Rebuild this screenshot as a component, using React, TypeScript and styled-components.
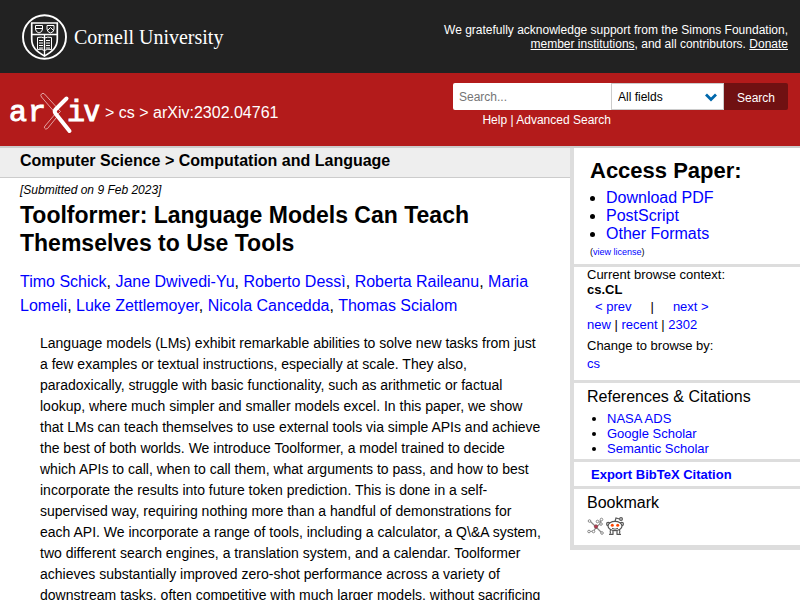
import React from "react";
import styled, { createGlobalStyle } from "styled-components";

const GlobalStyle = createGlobalStyle`
  * { box-sizing: border-box; }
  body {
    margin: 0;
    background: #fff;
    color: #000;
    font-family: "Liberation Sans", Arial, Helvetica, sans-serif;
    font-size: 16px;
  }
`;

const Link = styled.a`
  color: #00f;
  text-decoration: none;
`;

const TopBar = styled.div`
  display: flex;
  align-items: center;
  justify-content: space-between;
  background: #222;
  color: #fff;
  min-height: 73px;
  padding: 0 12px 0 22px;
`;

const Brand = styled.a`
  display: flex;
  align-items: center;
  gap: 7px;
  color: #fff;
  text-decoration: none;
  font-family: "Liberation Serif", "Times New Roman", serif;
  font-size: 20px;
  line-height: 24px;
`;

const Support = styled.p`
  margin: 0;
  font-size: 12px;
  line-height: 14px;
  text-align: right;
  a { color: #fff; text-decoration: underline; }
`;

const Header = styled.header`
  display: flex;
  justify-content: space-between;
  align-items: flex-start;
  background: #b31b1b;
  min-height: 75px;
  border-bottom: 2px solid #ccc;
  padding: 10px 12px 0 8px;
`;

const Crumbs = styled.nav`
  display: flex;
  align-items: center;
  gap: 4px;
  min-height: 60px;
  color: #fff;
  line-height: 18px;
  a { color: #fff; text-decoration: none; }
  svg { display: block; }
`;

const SearchForm = styled.form`
  width: 335px;
  color: #fff;
  font-size: 12px;
`;

const SearchRow = styled.div`
  display: flex;
  height: 27px;
`;

const SearchInput = styled.input`
  flex: 1;
  min-width: 0;
  border: 0;
  border-radius: 2px 0 0 2px;
  padding: 0 6px;
  font: inherit;
  &::placeholder { color: #757575; }
`;

const SelectBox = styled.div`
  position: relative;
  width: 113px;
  svg { position: absolute; right: 7px; top: 10px; pointer-events: none; }
`;

const Select = styled.select`
  appearance: none;
  width: 100%;
  height: 100%;
  border: 1px solid #ccc;
  border-radius: 0;
  background: #fff;
  color: #000;
  padding: 0 6px;
  font: inherit;
`;

const SearchButton = styled.button`
  width: 64px;
  border: 0;
  border-radius: 0 2px 2px 0;
  background: #701112;
  color: #fff;
  font: inherit;
  padding: 2px 0 0;
`;

const Help = styled.div`
  width: 158px;
  white-space: nowrap;
  text-align: right;
  line-height: 14px;
  margin-top: 3px;
  a { color: #fff; text-decoration: none; }
`;

const Columns = styled.div`
  display: grid;
  grid-template-columns: minmax(0, 1fr) 230px;
  align-items: start;
`;

const Subject = styled.div`
  background: #eee;
  border-bottom: 1px solid #ccc;
  padding: 3px 20px 7px;
  font-weight: bold;
  line-height: 19px;
`;

const Article = styled.article`
  padding: 5px 20px 0;
`;

const Dateline = styled.div`
  font-size: 12px;
  font-style: italic;
  line-height: 14px;
`;

const Title = styled.h1`
  margin: 4px 40px 13px 0;
  font-size: 23px;
  line-height: 28px;
`;

const Authors = styled.div`
  margin-right: 20px;
  line-height: 24px;
`;

const Abstract = styled.blockquote`
  margin: 15px 0 20px 20px;
  font-size: 14px;
  line-height: 21px;
`;

const Side = styled.aside`
  border-left: 4px solid #ddd;
  border-bottom: 5px solid #ddd;
`;

const Panel = styled.section<{ $pad: string }>`
  padding: ${(p) => p.$pad};
  font-size: 13px;
  line-height: 15px;
  & + & { border-top: 3px solid #ddd; }
`;

const PanelTitle = styled.h2`
  margin: 0;
  font-size: 22px;
  line-height: 26px;
`;

const SmallTitle = styled.h3`
  margin: 0;
  font-size: 16px;
  font-weight: normal;
  line-height: 19px;
`;

const LinkList = styled.ul<{ $size: number; $line: number }>`
  margin: 5px 0 3px;
  padding-left: ${(p) => (p.$size > 14 ? 16 : 20)}px;
  font-size: ${(p) => p.$size}px;
  line-height: ${(p) => p.$line}px;
`;

const License = styled.div`
  font-size: 9px;
  line-height: 12px;
`;

const PrevNext = styled.div`
  display: flex;
  gap: 19px;
  padding: 2px 8px 3px;
`;

const Line = styled.div<{ $top?: number }>`
  margin-top: ${(p) => p.$top ?? 0}px;
`;

const Icons = styled.div`
  display: flex;
  gap: 2px;
  margin-top: 5px;
  a { display: block; height: 18px; }
`;

const Seal = () => (
  <svg width="45" height="46" viewBox="0 0 45 46" fill="none" stroke="#fff">
    <ellipse cx="22.5" cy="23" rx="21.5" ry="21.8" strokeWidth="1.9" />
    <path d="M9.700 9h25.600v16c0 8.500-5 12.500-12.800 17C14.700 37.500 9.700 33.500 9.700 25z" strokeWidth="1.700" />
    <path d="M10 20.500h25M22.500 20.500V42" strokeWidth="1.300" />
    <path d="M13.500 11.500h7v3.500q0 3-3.500 4-3.500-1-3.500-4zM25 11.500h7v3.500q0 3-3.500 4-3.500-1-3.500-4zM14 14.500h6M26 16l2.500-2.500L31 16" />
    <path d="M15.500 23.500q4-1 7 .5 3-1.500 7-.5v12q-4-1-7 1-3-2-7-1zM17 26.500h4M17 29h4M17 31.500h4M17 34h4M24 26.500h4M24 29h4M24 31.500h4M24 34h4" />
  </svg>
);

const ArxivLogo = () => (
  <svg width="93" height="48" viewBox="0 0 93 48" role="img" aria-label="arXiv">
    <g fill="#fff" stroke="#fff" strokeWidth="1" fontFamily="Liberation Mono, monospace" fontSize="30">
      <text x="1" y="32">a</text>
      <text x="20" y="32">r</text>
      <text x="59" y="32">i</text>
      <text x="75" y="32" fontFamily="DejaVu Sans Mono, monospace" fontSize="29">v</text>
    </g>
    <path d="M33.500 5q-1.500 1 0 3L49 26l3.500-3.500L36.500 5q-1.500-1.500-3 0zM50.500 26L39.500 39.500q-2 1.500-3-.5-.5-1 .5-2l11-13" fill="none" stroke="#e3a3a3" />
    <path d="M58.500 9.500L47.500 20.500q-1.500 2 0 4L61.500 42" fill="none" stroke="#fff" strokeWidth="4" strokeLinecap="round" strokeLinejoin="round" />
  </svg>
);

const Chevron = () => (
  <svg width="12" height="9" viewBox="0 0 12 9" fill="none" stroke="#0068ac" strokeWidth="2.800">
    <path d="M1 1.500l5 5 5-5" />
  </svg>
);

const BibSonomy = () => (
  <svg width="17" height="18" viewBox="0 0 17 18" fill="none" stroke="#888">
    <path d="M3.500 4.500L9 10l4-3V3.500M13 7l1-3.500M9 10l5.500 5.500M9 10l-2 4-4 .5" strokeWidth="1.200" />
    <g fill="#fff">
      <circle cx="2.500" cy="4" r="1.300" />
      <circle cx="14.500" cy="2.500" r="1.300" />
      <circle cx="10.500" cy="4.500" r="1.300" />
      <circle cx="14" cy="7" r="1.300" />
      <circle cx="2" cy="14.500" r="1.300" />
      <circle cx="6.500" cy="14.500" r="1.300" />
      <circle cx="15" cy="16" r="1.300" />
    </g>
    <circle cx="9" cy="9.500" r="1.600" fill="#c03058" stroke="#844" />
  </svg>
);

const Reddit = () => (
  <svg width="18" height="18" viewBox="0 0 18 18" fill="#fff" stroke="#555" strokeWidth="1.200">
    <path d="M5 12q-1.500 2-.5 4.500M13 12q1.500 2 .5 4.500M3 17.300h4.500M10.500 17.300H15M7 13v4M11 13v4" />
    <circle cx="2.200" cy="7" r="1.600" />
    <circle cx="15.800" cy="7" r="1.600" />
    <ellipse cx="9" cy="9" rx="7" ry="4.700" />
    <path d="M9 4.300l1-3.300 3.500 1" fill="none" />
    <circle cx="15" cy="2" r="1.400" />
    <path d="M6 11.300q3 1.800 6 0" fill="none" strokeWidth="1" />
    <circle cx="6.300" cy="8.300" r="1.500" fill="#ff4500" stroke="none" />
    <circle cx="11.700" cy="8.300" r="1.500" fill="#ff4500" stroke="none" />
  </svg>
);

const authors = [
  "Timo Schick", "Jane Dwivedi-Yu", "Roberto Dessì", "Roberta Raileanu",
  "Maria Lomeli", "Luke Zettlemoyer", "Nicola Cancedda", "Thomas Scialom",
];

const abstractLines = [
  "Language models (LMs) exhibit remarkable abilities to solve new tasks from just",
  "a few examples or textual instructions, especially at scale. They also,",
  "paradoxically, struggle with basic functionality, such as arithmetic or factual",
  "lookup, where much simpler and smaller models excel. In this paper, we show",
  "that LMs can teach themselves to use external tools via simple APIs and achieve",
  "the best of both worlds. We introduce Toolformer, a model trained to decide",
  "which APIs to call, when to call them, what arguments to pass, and how to best",
  "incorporate the results into future token prediction. This is done in a self-",
  "supervised way, requiring nothing more than a handful of demonstrations for",
  "each API. We incorporate a range of tools, including a calculator, a Q\\&A system,",
  "two different search engines, a translation system, and a calendar. Toolformer",
  "achieves substantially improved zero-shot performance across a variety of",
  "downstream tasks, often competitive with much larger models, without sacrificing",
];

const Links = ({ items, size, line }: { items: string[]; size: number; line: number }) => (
  <LinkList $size={size} $line={line}>
    {items.map((item) => (
      <li key={item}><Link href="#">{item}</Link></li>
    ))}
  </LinkList>
);

export default function App() {
  return (
    <>
      <GlobalStyle />
      <TopBar>
        <Brand href="#"><Seal />Cornell University</Brand>
        <Support>
          We gratefully acknowledge support from the Simons Foundation,<br />
          <a href="#">member institutions</a>, and all contributors. <a href="#">Donate</a>
        </Support>
      </TopBar>
      <Header>
        <Crumbs>
          <a href="#"><ArxivLogo /></a>
          <span>&gt; <a href="#">cs</a> &gt; arXiv:2302.04761</span>
        </Crumbs>
        <SearchForm>
          <SearchRow>
            <SearchInput type="text" placeholder="Search..." aria-label="Search term" />
            <SelectBox>
              <Select aria-label="Field to search"><option>All fields</option></Select>
              <Chevron />
            </SelectBox>
            <SearchButton type="button">Search</SearchButton>
          </SearchRow>
          <Help><a href="#">Help</a> | <a href="#">Advanced Search</a></Help>
        </SearchForm>
      </Header>
      <Columns>
        <main>
          <Subject>Computer Science &gt; Computation and Language</Subject>
          <Article>
            <Dateline>[Submitted on 9 Feb 2023]</Dateline>
            <Title>Toolformer: Language Models Can Teach Themselves to Use Tools</Title>
            <Authors>
              {authors.map((name, i) => (
                <React.Fragment key={name}>
                  {i > 0 && ", "}
                  <Link href="#">{name}</Link>
                </React.Fragment>
              ))}
            </Authors>
            <Abstract>
              {abstractLines.map((text) => (
                <React.Fragment key={text}>{text}<br /></React.Fragment>
              ))}
            </Abstract>
          </Article>
        </main>
        <Side>
          <Panel $pad="10px 16px 6px">
            <PanelTitle>Access Paper:</PanelTitle>
            <Links items={["Download PDF", "PostScript", "Other Formats"]} size={16} line={18} />
            <License>(<Link href="#">view license</Link>)</License>
          </Panel>
          <Panel $pad="0 13px 9px">
            <Line>Current browse context:</Line>
            <Line><b>cs.CL</b></Line>
            <PrevNext>
              <Link href="#">&lt; prev</Link>
              <span>|</span>
              <Link href="#">next &gt;</Link>
            </PrevNext>
            <Line>
              <Link href="#">new</Link> | <Link href="#">recent</Link> | <Link href="#">2302</Link>
            </Line>
            <Line $top={6}>Change to browse by:</Line>
            <Line $top={3}><Link href="#">cs</Link></Line>
          </Panel>
          <Panel $pad="4px 13px 0">
            <SmallTitle>References &amp; Citations</SmallTitle>
            <Links items={["NASA ADS", "Google Scholar", "Semantic Scholar"]} size={13} line={15} />
          </Panel>
          <Panel $pad="5px 17px 4px">
            <Link href="#"><b>Export BibTeX Citation</b></Link>
          </Panel>
          <Panel $pad="4px 13px 10px">
            <SmallTitle>Bookmark</SmallTitle>
            <Icons>
              <a href="#" aria-label="BibSonomy"><BibSonomy /></a>
              <a href="#" aria-label="Reddit"><Reddit /></a>
            </Icons>
          </Panel>
        </Side>
      </Columns>
    </>
  );
}
